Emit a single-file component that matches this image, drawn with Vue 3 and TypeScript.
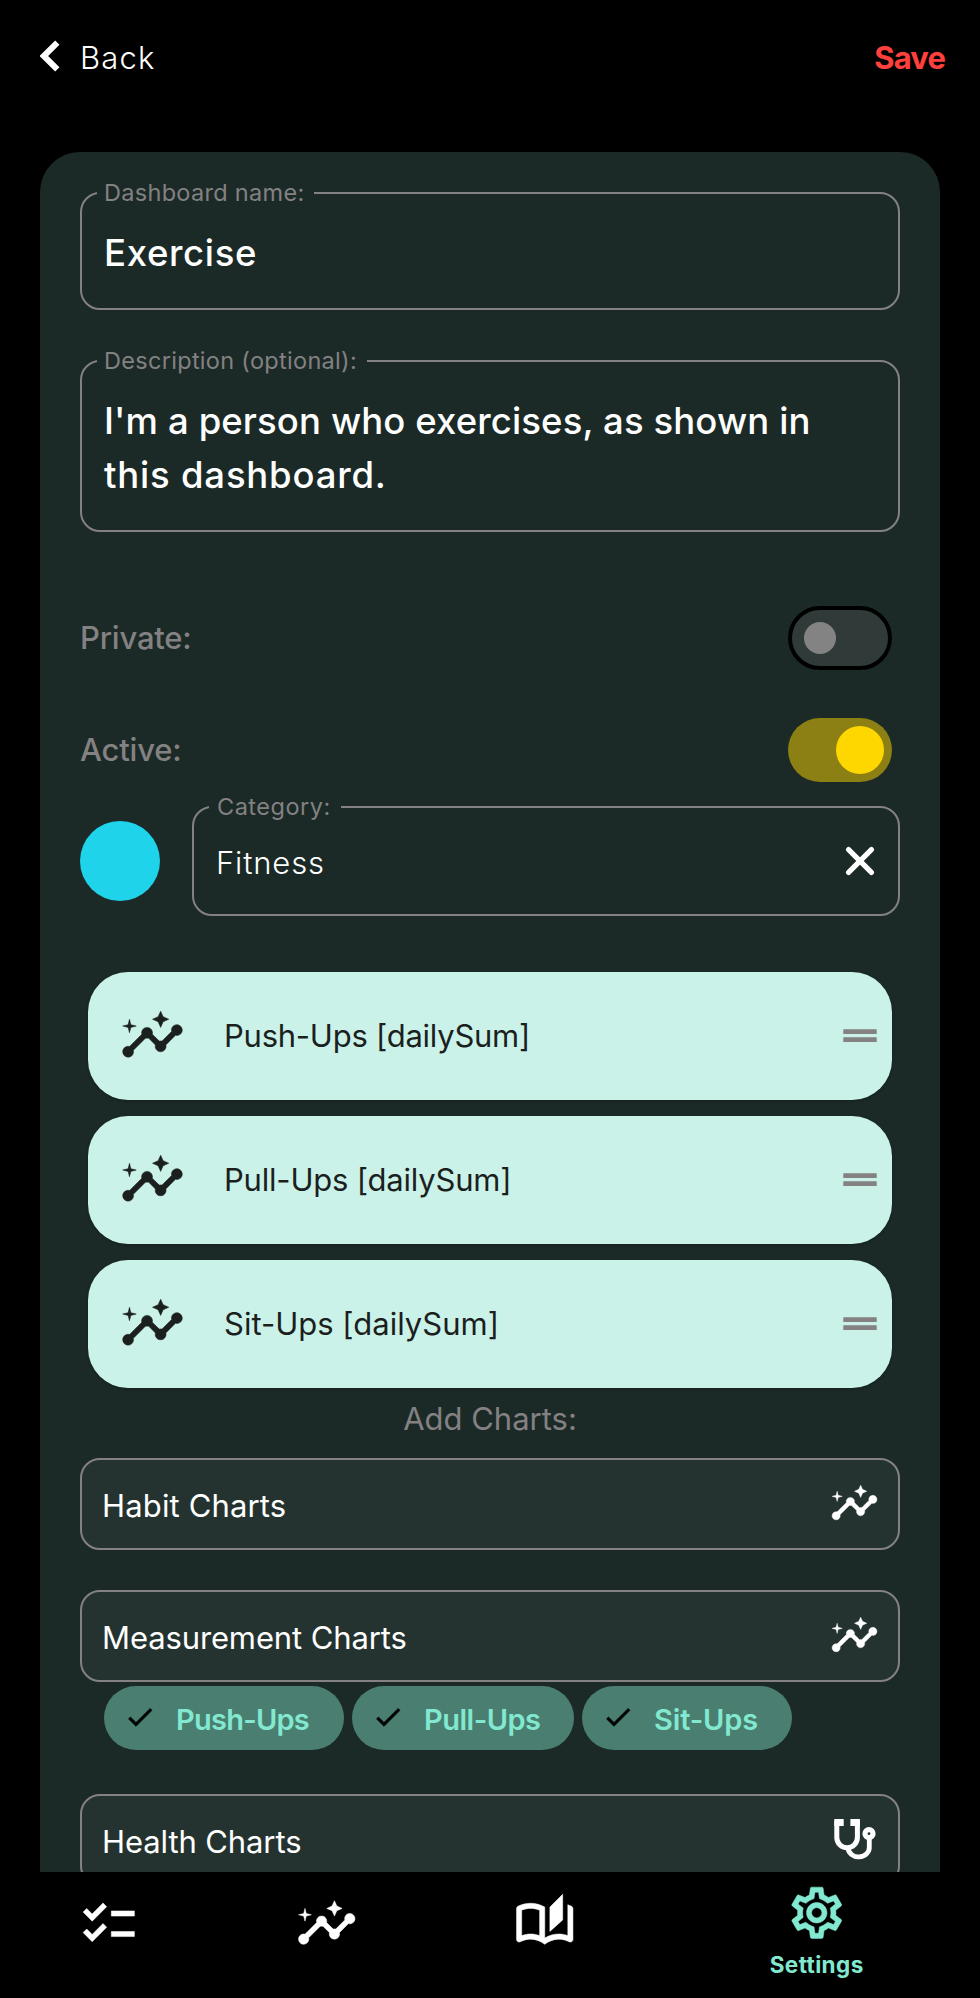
<script setup lang="ts">
interface ChartRow { id: string; title: string }

const rows: ChartRow[] = [
  { id: 'push', title: 'Push-Ups [dailySum]' },
  { id: 'pull', title: 'Pull-Ups [dailySum]' },
  { id: 'sit', title: 'Sit-Ups [dailySum]' },
]

const chips: ChartRow[] = [
  { id: 'push', title: 'Push-Ups' },
  { id: 'pull', title: 'Pull-Ups' },
  { id: 'sit', title: 'Sit-Ups' },
]

// Icon paths on a 24 × 24 grid
const insights =
  'M21 8c-1.45 0-2.26 1.44-1.93 2.51l-3.55 3.56c-.3-.09-.74-.09-1.04 0l-2.55-2.55C12.27 10.45 11.46 9 10 9c-1.45 0-2.27 1.44-1.93 2.52l-4.56 4.55C2.44 15.74 1 16.55 1 18c0 1.1.9 2 2 2 1.45 0 2.26-1.44 1.93-2.51l4.55-4.56c.3.09.74.09 1.04 0l2.55 2.55C12.73 16.55 13.54 18 15 18c1.45 0 2.27-1.44 1.93-2.52l3.56-3.55C21.56 12.26 23 11.45 23 10c0-1.1-.9-2-2-2zM15 9l.94-2.07L18 6l-2.06-.93L15 3l-.92 2.07L12 6l2.08.93zM3.5 11L4 9l2-.5L4 8l-.5-2L3 8l-2 .5L3 9z'
const checklist =
  'M22 7h-9v2h9V7zm0 8h-9v2h9v-2zM5.54 11L2 7.46l1.41-1.41 2.12 2.12 4.24-4.24 1.41 1.41L5.54 11zm0 8L2 15.46l1.41-1.41 2.12 2.12 4.24-4.24 1.41 1.41L5.54 19z'
const book =
  'M22.47 5.2c-.47-.24-.96-.44-1.47-.61v12.03c-1.14-.41-2.31-.62-3.5-.62-1.9 0-3.78.54-5.5 1.58V5.48C10.38 4.55 8.51 4 6.5 4c-1.79 0-3.48.44-4.97 1.2-.33.16-.53.51-.53.88v12.08c0 .58.47.99 1 .99.16 0 .32-.04.48-.12C3.69 18.4 5.05 18 6.5 18c2.07 0 3.98.82 5.5 2 1.52-1.18 3.43-2 5.5-2 1.45 0 2.81.4 4.02 1.04.16.08.32.12.48.12.52 0 1-.41 1-.99V6.08c0-.37-.2-.72-.53-.88zM10 16.62C8.86 16.21 7.69 16 6.5 16s-2.36.21-3.5.62V6.71C4.11 6.24 5.28 6 6.5 6c1.2 0 2.39.25 3.5.72v9.9zM19 .5l-5 5V15l5-4.5V.5z'
const gear =
  'M19.43 12.98c.04-.32.07-.64.07-.98 0-.34-.03-.66-.07-.98l2.11-1.65c.19-.15.24-.42.12-.64l-2-3.46c-.09-.16-.26-.25-.44-.25-.06 0-.12.01-.17.03l-2.49 1c-.52-.4-1.08-.73-1.69-.98l-.38-2.65C14.46 2.18 14.25 2 14 2h-4c-.25 0-.46.18-.49.42l-.38 2.65c-.61.25-1.17.59-1.69.98l-2.49-1c-.06-.02-.12-.03-.18-.03-.17 0-.34.09-.43.25l-2 3.46c-.13.22-.07.49.12.64l2.11 1.65c-.04.32-.07.65-.07.98 0 .33.03.66.07.98l-2.11 1.65c-.19.15-.24.42-.12.64l2 3.46c.09.16.26.25.44.25.06 0 .12-.01.17-.03l2.49-1c.52.4 1.08.73 1.69.98l.38 2.65c.03.24.24.42.49.42h4c.25 0 .46-.18.49-.42l.38-2.65c.61-.25 1.17-.59 1.69-.98l2.49 1c.06.02.12.03.18.03.17 0 .34-.09.43-.25l2-3.46c.12-.22.07-.49-.12-.64l-2.11-1.65zm-1.98-1.71c.04.31.05.52.05.73 0 .21-.02.43-.05.73l-.14 1.13.89.7 1.08.84-.7 1.21-1.27-.51-1.04-.42-.9.68c-.43.32-.84.56-1.25.73l-1.06.43-.16 1.13-.2 1.35h-1.4l-.19-1.35-.16-1.13-1.06-.43c-.43-.18-.83-.41-1.23-.71l-.91-.7-1.06.43-1.27.51-.7-1.21 1.08-.84.89-.7-.14-1.13c-.03-.31-.05-.54-.05-.74s.02-.43.05-.73l.14-1.13-.89-.7-1.08-.84.7-1.21 1.27.51 1.04.42.9-.68c.43-.32.84-.56 1.25-.73l1.06-.43.16-1.13.2-1.35h1.39l.19 1.35.16 1.13 1.06.43c.43.18.83.41 1.23.71l.91.7 1.06-.43 1.27-.51.7 1.21-1.07.85-.89.7.14 1.13zM12 8c-2.21 0-4 1.79-4 4s1.79 4 4 4 4-1.79 4-4-1.79-4-4-4zm0 6c-1.1 0-2-.9-2-2s.9-2 2-2 2 .9 2 2-.9 2-2 2z'
const check = 'M9 16.17L4.83 12l-1.42 1.41L9 19 21 7l-1.41-1.41z'
</script>

<template>
  <div class="screen">
    <header class="topbar">
      <button class="back" type="button">
        <svg class="chevron" viewBox="0 0 20 32">
          <path d="M17.3 2.6 3.8 16l13.5 13.4" fill="none" stroke="currentColor" stroke-width="6" />
        </svg>
        <span>Back</span>
      </button>
      <button class="save" type="button">Save</button>
    </header>

    <main class="card">
      <div class="field name">
        <span class="label">Dashboard name:</span>
        <span class="value">Exercise</span>
      </div>

      <div class="field desc">
        <span class="label">Description (optional):</span>
        <span class="line">I'm a person who exercises, as shown in</span>
        <span class="line short">this dashboard.</span>
      </div>

      <div class="toggle-row first">
        <span class="caption">Private:</span>
        <span class="switch off"><i></i></span>
      </div>
      <div class="toggle-row">
        <span class="caption">Active:</span>
        <span class="switch on"><i></i></span>
      </div>

      <div class="category">
        <span class="swatch"></span>
        <div class="field cat">
          <span class="label">Category:</span>
          <span class="value">Fitness</span>
          <svg class="clear" viewBox="0 0 30 30">
            <path d="M3.6 3.6 26.4 26.4M26.4 3.6 3.6 26.4" stroke="currentColor" stroke-width="5.2" stroke-linecap="round" />
          </svg>
        </div>
      </div>

      <ul class="rows">
        <li v-for="row in rows" :key="row.id">
          <svg class="trend" viewBox="0 0 24 24"><path :d="insights" /></svg>
          <span :class="row.id">{{ row.title }}</span>
          <svg class="handle" viewBox="0 0 34 14">
            <path d="M.3 .3h33.4v4.7H.3zM.3 8.3h33.4v4.7H.3z" />
          </svg>
        </li>
      </ul>

      <p class="add">Add Charts:</p>

      <div class="group habit">
        <span>Habit Charts</span>
        <svg class="small-trend" viewBox="0 0 24 24"><path :d="insights" /></svg>
      </div>

      <div class="group measure">
        <span>Measurement Charts</span>
        <svg class="small-trend" viewBox="0 0 24 24"><path :d="insights" /></svg>
      </div>
      <div class="chips">
        <span v-for="chip in chips" :key="chip.id" class="chip" :class="chip.id">
          <svg viewBox="0 0 24 24"><path :d="check" /></svg>
          <span>{{ chip.title }}</span>
        </span>
      </div>

      <div class="group health">
        <span>Health Charts</span>
        <svg class="steth" viewBox="0 0 48 48">
          <path d="M3.3 3h9.4v7H3.3zM19.4 3h9.5v7h-9.5z" />
          <g fill="none" stroke="currentColor">
            <path d="M5.8 5v16.4a10.3 10.3 0 0 0 20.6 0V5" stroke-width="5" />
            <path d="M17 32a10.6 9.6 0 0 0 21.3-1.4V22" stroke-width="4.8" />
            <circle cx="38" cy="17.7" r="4" stroke-width="5.2" />
          </g>
        </svg>
      </div>
    </main>

    <nav class="tabs">
      <span class="tab"><svg viewBox="0 0 24 24"><path :d="checklist" /></svg></span>
      <span class="tab"><svg viewBox="0 0 24 24"><path :d="insights" /></svg></span>
      <span class="tab"><svg viewBox="0 0 24 24"><path :d="book" /></svg></span>
      <span class="tab active">
        <svg viewBox="0 0 24 24"><path :d="gear" /></svg>
        <span>Settings</span>
      </span>
    </nav>
  </div>
</template>

<style>
body { background: #000; }
</style>

<style scoped>
.screen {
  display: flex;
  flex-direction: column;
  width: 980px;
  height: 1998px;
  overflow: hidden;
  background: #000;
  color: #fff;
  font-family: Inter, "Liberation Sans", sans-serif;
  font-size: 31px;
}
.screen, .screen * { box-sizing: border-box; }
svg { display: block; flex: none; fill: currentColor; }
span { white-space: nowrap; }

.topbar {
  display: flex;
  justify-content: space-between;
  align-items: center;
  height: 115px;
  margin-bottom: 37px;
  padding: 0 35px 0 40px;
}
button {
  padding: 0;
  border: 0;
  background: none;
  color: inherit;
  font: inherit;
}
.back { display: flex; align-items: center; gap: 20px; font-weight: 300; letter-spacing: 1.17px; }
.chevron { width: 20px; height: 32px; margin-bottom: 3px; }
.save { color: #ff403c; font-weight: 700; letter-spacing: -0.9px; }

.card {
  flex: 1;
  min-height: 0;
  overflow: hidden;
  margin: 0 40px;
  padding: 40px 40px 0;
  border-radius: 40px 40px 0 0;
  background: #1b2a27;
}

.field {
  position: relative;
  border: 2px solid #838182;
  border-radius: 20px;
}
.label {
  position: absolute;
  top: -14px;
  left: 15px;
  padding: 0 10px 0 7px;
  background: #1b2a27;
  color: #838182;
  font-size: 23.5px;
  font-weight: 400;
  line-height: 26px;
  letter-spacing: 0.3px;
}
.name {
  display: flex;
  align-items: center;
  height: 118px;
  padding: 3px 22px 0;
  font-size: 36.5px;
  font-weight: 500;
  letter-spacing: 0.67px;
}
.desc {
  height: 172px;
  margin-top: 50px;
  padding: 32px 22px 0;
  font-size: 36.5px;
  font-weight: 500;
}
.line { display: block; line-height: 54px; letter-spacing: 0.11px; }
.line.short { letter-spacing: 0.8px; }

.toggle-row {
  display: flex;
  justify-content: space-between;
  align-items: center;
  height: 64px;
  margin-top: 48px;
  padding-right: 8px;
  color: #838182;
  font-weight: 500;
  letter-spacing: -0.2px;
}
.toggle-row.first { margin-top: 74px; }
.caption { padding-bottom: 2px; }
.switch {
  display: flex;
  align-items: center;
  width: 104px;
  height: 64px;
  border-radius: 32px;
}
.switch i { display: block; border-radius: 50%; }
.off { padding-left: 12px; border: 4px solid #000; background: #303b39; }
.off i { width: 32px; height: 32px; background: #838383; }
.on { justify-content: flex-end; padding-right: 8px; background: #8c7f13; }
.on i { width: 48px; height: 48px; background: #ffd700; }

.category { display: flex; align-items: center; gap: 32px; margin-top: 24px; }
.swatch { width: 80px; height: 80px; border-radius: 50%; background: #1fd3eb; }
.cat {
  display: flex;
  flex: 1;
  justify-content: space-between;
  align-items: center;
  height: 110px;
  padding: 0 23px 0 22px;
}
.cat .label { padding-left: 8px; letter-spacing: 0.5px; }
.cat .value { padding-top: 3px; font-weight: 300; letter-spacing: 0.85px; }
.clear { width: 30px; height: 30px; }

.rows {
  display: grid;
  gap: 16px;
  margin: 56px 0 0;
  padding: 0 8px;
  list-style: none;
}
.rows li {
  display: flex;
  align-items: center;
  height: 128px;
  padding: 0 15px 0 32px;
  border-radius: 40px;
  background: #cbf2e8;
  box-shadow: 0 1px 3px rgba(0, 0, 0, 0.25);
  color: #1b1f1e;
}
.rows span { flex: 1; margin-left: 39px; padding-bottom: 2px; }
.rows span.push { letter-spacing: -0.25px; }
.rows span.pull { letter-spacing: -0.2px; }
.trend { width: 65px; height: 65px; margin-bottom: 1px; stroke: currentColor; stroke-width: 0.2; }
.handle { width: 34px; height: 14px; color: #838182; }

.add {
  margin: 0 0 8px;
  color: #838182;
  line-height: 62px;
  text-align: center;
}

.group {
  display: flex;
  justify-content: space-between;
  align-items: center;
  height: 92px;
  padding: 0 19px 0 20px;
  border: 2px solid #838182;
  border-radius: 20px;
  background: #253330;
}
.group span { padding-top: 3px; }
.habit span { letter-spacing: 0.15px; }
.measure span { letter-spacing: -0.12px; }
.health span { letter-spacing: -0.1px; }
.measure { margin-top: 40px; }
.health { margin-top: 44px; }
.small-trend { width: 49px; height: 49px; margin-bottom: 1px; stroke: currentColor; stroke-width: 0.2; }
.steth { width: 48px; height: 48px; }

.chips { display: flex; gap: 8px; margin-top: 4px; padding-left: 24px; }
.chip {
  display: flex;
  align-items: center;
  width: 240px;
  height: 64px;
  padding-left: 20px;
  border-radius: 32px;
  background: #497e70;
  color: #82e8cf;
  font-size: 29px;
  font-weight: 600;
}
.chip svg { width: 32px; height: 32px; margin: 0 20px 2px 0; color: #000; stroke: currentColor; stroke-width: 0.5; }
.chip span { padding-top: 3px; }
.chip.push { letter-spacing: -0.75px; }
.chip.pull { width: 222px; letter-spacing: -0.5px; }
.chip.sit { width: 210px; letter-spacing: -0.15px; }

.tabs { display: flex; height: 126px; }
.tab {
  display: flex;
  flex: 2;
  flex-direction: column;
  align-items: center;
  padding-top: 21px;
}
.tab svg { width: 61.5px; height: 61.5px; stroke: currentColor; stroke-width: 0.2; }
.tab.active { flex: 3; padding-top: 10px; color: #82e8cf; }
.active span {
  margin-top: 7px;
  font-size: 22.5px;
  font-weight: 700;
  line-height: 28px;
  letter-spacing: 0.4px;
}
</style>
